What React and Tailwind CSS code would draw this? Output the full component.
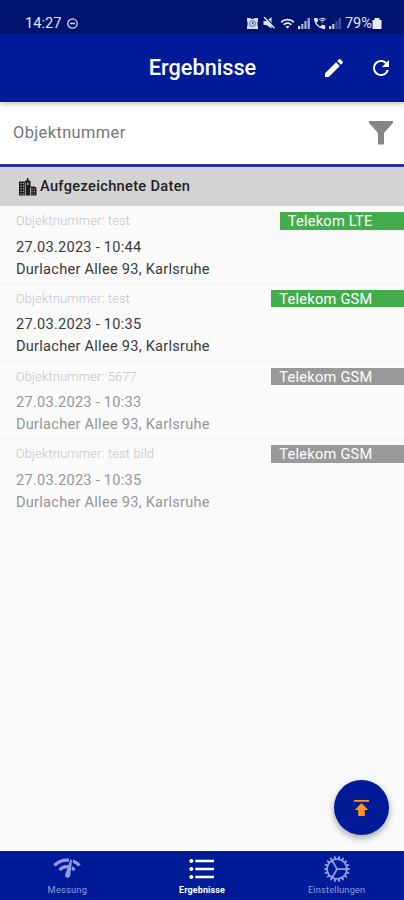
import React from "react";
import {
  MdWifi,
  MdWifiCalling3,
  MdEdit,
  MdRefresh,
  MdFormatListBulleted,
} from "react-icons/md";
import { IoIosCog } from "react-icons/io";

const entries = [
  { id: "test", date: "27.03.2023 - 10:44", tag: "Telekom LTE", active: true },
  { id: "test", date: "27.03.2023 - 10:35", tag: "Telekom GSM", active: true },
  { id: "5677", date: "27.03.2023 - 10:33", tag: "Telekom GSM", active: false },
  { id: "test bild", date: "27.03.2023 - 10:35", tag: "Telekom GSM", active: false },
];

function Alarm() {
  return (
    <svg width="11" height="11" viewBox="0 0 11 11">
      <path fill="#d5dbf0" d="M0 0h3l1 .8h3L8 0h3v3l-.5 1v3.5l.5 1V11H0V8.500l.5-1V4L0 3z" />
      <circle cx="5.500" cy="5.700" r="3" fill="none" stroke="#00136f" strokeWidth=".6" />
      <path d="M5.500 4v2h1.500" fill="none" stroke="#00136f" strokeWidth=".8" />
    </svg>
  );
}

function Muted() {
  return (
    <svg width="13" height="12" viewBox="0 0 13 12">
      <path fill="#e0e5f6" d="M.5 4h3L8.500 0v11.500L3.500 8h-3z" />
      <path d="M2.500 0L12.500 11" stroke="#00136f" strokeWidth="1.200" />
      <path d="M1 0L11.500 11.300" stroke="#e0e5f6" strokeWidth="1.400" />
    </svg>
  );
}

function Signal({ full }) {
  return (
    <svg width="12" height="11" viewBox="0 0 12 11" fill="#d5dbf0">
      <rect x="0" y="8" width="2.200" height="3" />
      <rect x="3.200" y="6" width="2.200" height="5" opacity={full ? 0.8 : 0.9} />
      <rect x="6.400" y="3" width="2.200" height="8" opacity={full ? 0.8 : 0.3} />
      <rect x="9.500" y="0" width="2.500" height="11" opacity={full ? 0.7 : 0.3} />
    </svg>
  );
}

function NetworkCheck() {
  return (
    <svg width="28" height="22" viewBox="0 0 28 22" fill="none" stroke="#8d9dde">
      <path d="M1.500 8.500C8 1.300 20 1.300 26.500 8.500" strokeWidth="3.200" />
      <path d="M6.500 13C10.500 8.500 17.500 8.500 21.500 13" strokeWidth="3.200" />
      <path d="M18.300 1.500L15.500 19" stroke="#001b98" strokeWidth="4" />
      <path fill="#8d9dde" stroke="none" d="M17.400 2.500L19 2.900 17.300 18.500a2.600 2.600 0 1 1-4.900-1.500z" />
    </svg>
  );
}

function Buildings() {
  return (
    <svg width="18" height="18" viewBox="0 0 18 18">
      <path fill="#1a1a1a" d="M0 3.500h6.200V3L8 2V0h1.400v2L11.500 3.200V8.500h4.500l1.500 1.500v7.500H0z" />
      <path
        stroke="#d3d3d3"
        strokeWidth="1"
        d="M2 5v11.500M4.300 5v11.500M13 10.500v6M15.300 10.500v6"
        strokeDasharray="1.200 1.400"
        fill="none"
      />
      <path stroke="#d3d3d3" strokeWidth=".8" d="M6.300 4.500v13M11.500 9.500v8" fill="none" />
      <path stroke="#d3d3d3" strokeWidth="1.200" d="M8.900 4.500v2.500" fill="none" />
    </svg>
  );
}

function Row({ entry }) {
  return (
    <div className="flex h-[77.8px] items-start justify-between border-b border-[#f2f2f2] pl-4 last:border-b-0">
      <div className="pt-[7px]">
        <div className="text-[12.6px] leading-4 font-light tracking-[0.3px] text-[#c4c4c4]">
          Objektnummer: {entry.id}
        </div>
        <div
          className={`pt-[6.5px] text-[14.6px] leading-[22px] tracking-[0.25px] ${
            entry.active ? "text-[#3a3a3a]" : "text-[#969696]"
          }`}
        >
          <div>{entry.date}</div>
          <div>Durlacher Allee 93, Karlsruhe</div>
        </div>
      </div>
      <div
        className={`mt-[6px] h-[17.5px] pr-[31.5px] pl-2 text-[14.6px] leading-[18px] tracking-[0.25px] text-white ${
          entry.active ? "bg-[#43ad4d]" : "bg-[#999]"
        }`}
      >
        {entry.tag}
      </div>
    </div>
  );
}

export default function App() {
  return (
    <div className="relative flex h-[900px] w-[404px] flex-col overflow-hidden bg-[#fafafa] font-['Roboto',sans-serif]">
      <div className="flex h-[33px] shrink-0 items-start justify-between bg-[#00136f] pt-[15px] pr-[22px] pl-[25px] text-[#e0e5f6]">
        <div className="flex h-4 items-center gap-[6px]">
          <span className="text-[14.6px] leading-4">14:27</span>
          <svg width="11" height="11" viewBox="0 0 11 11" fill="none" stroke="#d5dbf0">
            <circle cx="5.5" cy="5.5" r="4.700" strokeWidth="1.300" />
            <path d="M3 5.500h5" strokeWidth="1.500" />
          </svg>
        </div>
        <div className="flex h-4 items-center">
          <Alarm />
          <span className="ml-[5px] flex"><Muted /></span>
          <MdWifi size={15} className="ml-[4px]" />
          <span className="ml-[3px] flex"><Signal full /></span>
          <MdWifiCalling3 size={15} className="ml-[2px]" />
          <span className="ml-[2px] flex"><Signal /></span>
          <span className="ml-[4px] text-[14.6px] leading-4">79%</span>
          <svg width="10" height="12" viewBox="0 0 10 12" fill="#e8ecfa">
            <path d="M2.500 1h5v2H9.500v9h-9V3h2z" />
          </svg>
        </div>
      </div>

      <header className="z-10 grid h-[69px] shrink-0 grid-cols-[1fr_auto_1fr] items-center bg-[#001b98] pr-[11px] pl-[11px] text-white shadow-[0_2px_5px_rgba(0,0,0,0.25)]">
        <h1 className="col-start-2 pt-[2px] pl-px text-[21.7px] font-medium">Ergebnisse</h1>
        <div className="flex justify-end gap-[23px]">
          <MdEdit size={24} />
          <MdRefresh size={24} />
        </div>
      </header>

      <div className="flex h-[65px] shrink-0 items-center justify-between border-b-3 border-[#27319b] bg-white pr-[11px] pl-[13px]">
        <span className="text-[16.4px] tracking-[0.4px] text-[#757575]">Objektnummer</span>
        <svg width="24" height="24" viewBox="0 0 24 24" fill="#858585">
          <path d="M0 0h24v2l-9 10v11.500H9V12L0 2z" />
        </svg>
      </div>

      <div className="flex h-[39px] shrink-0 items-center bg-[#d3d3d3] pl-[19px] text-[#222]">
        <Buildings />
        <span className="ml-[3px] text-[14.6px] font-medium tracking-[0.33px]">Aufgezeichnete Daten</span>
      </div>

      <main className="flex-1">
        {entries.map((entry, i) => (
          <Row key={i} entry={entry} />
        ))}
      </main>

      <button className="absolute top-[780px] left-[334px] flex size-[55px] items-center justify-center rounded-full bg-[#001b98] shadow-[0_3px_7px_rgba(0,0,0,0.35)]">
        <svg width="15" height="16" viewBox="0 0 15 16" fill="#ff971c">
          <path d="M0 0h15v1.700H0zM7.500 3L14.300 10H10.800V16H4.200V10H.7z" />
        </svg>
      </button>

      <nav className="grid h-[49px] shrink-0 grid-cols-3 bg-[#001b98] text-[9.3px] leading-[10px] text-[#8d9dde]">
        <div className="flex flex-col items-center pt-[6px]">
          <NetworkCheck />
          <span className="mt-[6px] tracking-[0.2px]">Messung</span>
        </div>
        <div className="flex flex-col items-center pt-[2px] text-white">
          <MdFormatListBulleted size={32} />
          <span className="text-[9px] font-bold tracking-[0.1px]">Ergebnisse</span>
        </div>
        <div className="flex flex-col items-center pt-[2px]">
          <IoIosCog size={32} />
          <span className="tracking-[0.15px]">Einstellungen</span>
        </div>
      </nav>
    </div>
  );
}
